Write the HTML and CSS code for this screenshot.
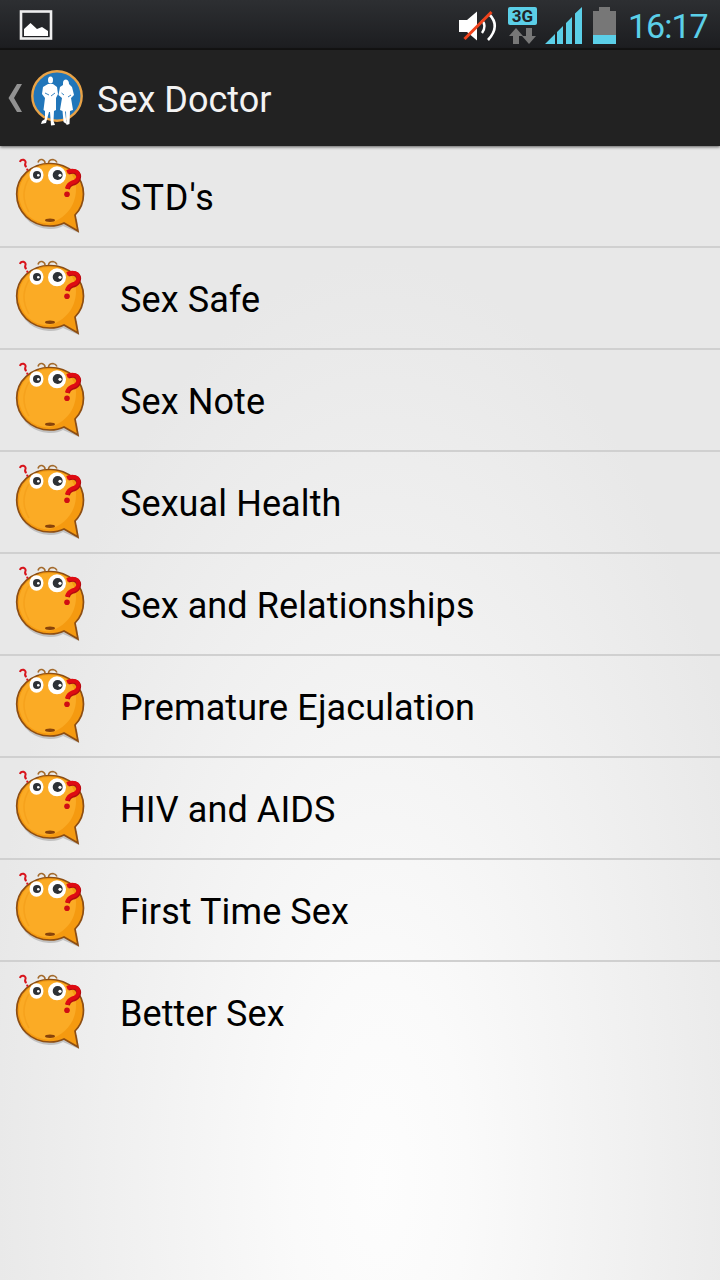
FILE: index.html
```html
<!DOCTYPE html>
<html lang="en">
  <head>
    <meta charset="UTF-8" />
    <meta name="viewport" content="width=device-width, initial-scale=1" />
    <title>Sex Doctor</title>
    <link rel="stylesheet" href="styles.css">
  </head>
  <body>
    <svg class="sprite" aria-hidden="true">
      <symbol id="face" viewBox="0 0 110 100">
        <path d="M18 58Q25 81 49 83Q57 83.500 63 80L79 87L77 73Z" fill="#999" opacity=".5" />
        <path d="M38 16.500Q39 13 42 13.500Q45 14.500 45 17M48.500 17Q49 13.500 53 13.500Q56 14 57 16.500" fill="none" stroke="#a36a2c" stroke-width="1.600" />
        <path d="M50 17.500C69 17.500 83.500 31 83.500 48C83.500 57 80 64 75 69L78 85L64 77C60 79 55 80 50 80C31 80 16.700 66 16.700 48C16.700 31 31 17.500 50 17.500Z" fill="#f59a10" stroke="#8d4e13" stroke-width="1.700" />
        <path d="M48 19C66 18 76 28 76 43C76 60 65 73 49 77.500C31 77 19 64 19 48C19 32 31 20 48 19Z" fill="#fbab25" />
        <path d="M29 66Q19 49 29 32M39 20Q49 17 62 21" fill="none" stroke="#f39b15" stroke-width="1.500" opacity=".55" />
        <ellipse cx="50" cy="74.300" rx="5" ry="1.700" fill="#87430a" />
        <ellipse cx="36.500" cy="29" rx="7" ry="7.800" fill="#fff" />
        <circle cx="57" cy="29.300" r="9" fill="#fff" />
        <circle cx="37" cy="29" r="4" fill="#2d3136" />
        <circle cx="57.700" cy="29" r="5" fill="#2d3136" />
        <circle cx="38.300" cy="29.300" r="1.300" fill="#fff" />
        <circle cx="60" cy="29.300" r="1.600" fill="#fff" />
        <path d="M20 16Q20.500 13.500 23.500 13.800Q26.500 15 25.300 17.500Q24.500 19.500 26.500 21" fill="none" stroke="#d8141c" stroke-width="2" />
        <circle cx="27.300" cy="23.700" r="1.100" fill="#d8141c" />
        <path d="M68 26.500Q74 24 77.500 27Q80 30 78 34Q76 37 72.500 37.500Q68.500 39 67.500 43" fill="none" stroke="#b20b10" stroke-width="4.500" />
        <path d="M67 26Q73 23.500 77 26Q79.500 29 77.500 33Q75.500 36 72 36.500Q68 38 67 42.500" fill="none" stroke="#df0b13" stroke-width="3.800" />
        <circle cx="67" cy="48.300" r="2.800" fill="#cf0d14" />
      </symbol>
    </svg>

    <div class="status-bar">
      <svg class="picture-icon" viewBox="0 0 34 32" width="34" height="32">
        <rect x="2" y="2.500" width="30" height="27" fill="none" stroke="#eee" stroke-width="2.600" />
        <path d="M5 27V20L11.500 14L18 20L23 18L29 22V27Z" fill="#fff" />
      </svg>
      <svg viewBox="455 0 165 50" width="165" height="50">
        <path d="M459 20H467L477 11.500V40.500L467 32H459Z" fill="#fff" />
        <path d="M482 20Q487 26 482 33" fill="none" stroke="#fff" stroke-width="2.400" />
        <path d="M489 14Q501 26 488 40" fill="none" stroke="#fff" stroke-width="2.600" />
        <path d="M464.500 39L491.500 12" stroke="#f0431c" stroke-width="3" />
        <rect x="508" y="7" width="29" height="18" rx="2" fill="#5bcfe8" />
        <text class="network" x="522.500" y="22" text-anchor="middle">3G</text>
        <path d="M516 28L523 36H519V44H513V36H509Z" fill="#777" />
        <path d="M526 28H532V36H536L529 44L522 36H526Z" fill="#777" />
        <path d="M545 44L555 34V44ZM557 44V32L563 26V44ZM566 44V23L572 17V44ZM575 44V13.500L582 7V44Z" fill="#5bcfe8" />
        <path d="M599 7H610V11H616V35H593V11H599Z" fill="#777" />
        <rect x="593" y="35" width="23" height="9" fill="#5bcfe8" />
      </svg>
      <span class="clock">16:17</span>
    </div>

    <header class="action-bar">
      <svg viewBox="0 0 90 96" width="90" height="96">
        <path d="M17 34H22L14 48L22 62H17L8.500 48Z" fill="#929292" />
        <circle cx="57" cy="46" r="24.700" fill="#2176ba" stroke="#e9a347" stroke-width="2.400" />
        <g fill="#fff">
          <ellipse cx="50.500" cy="30" rx="2.500" ry="3.500" />
          <path d="M48 34L53 34L57 37L58 44L56 48L56 60L54 61L53.500 71L55 75L51 75.500L50 62H49L46 73L41 74L42 71L45 69L45 61L43.500 60L45 48L42 44L43 37Z" />
          <path d="M63 33Q63 29.500 66 29.500Q69 30 69 34L72 37L74 45L71 48L73 60L70 61L69.500 74L66.500 75L66 62L65 61L66.500 74L63.500 72L62.500 61L60 60L62 48L58.500 45L60 37L63 35Z" />
        </g>
        <path d="M45 43L49 45M55 43L51 46M61.500 43L64 45M68 47L71 45" stroke="#2176ba" stroke-width=".9" />
      </svg>
      <h1>Sex Doctor</h1>
    </header>

    <ul class="topics">
      <li class="abbr"><svg class="face"><use href="#face" /></svg><span>STD's</span></li>
      <li><svg class="face"><use href="#face" /></svg><span>Sex Safe</span></li>
      <li><svg class="face"><use href="#face" /></svg><span>Sex Note</span></li>
      <li><svg class="face"><use href="#face" /></svg><span>Sexual Health</span></li>
      <li><svg class="face"><use href="#face" /></svg><span>Sex and Relationships</span></li>
      <li><svg class="face"><use href="#face" /></svg><span>Premature Ejaculation</span></li>
      <li><svg class="face"><use href="#face" /></svg><span>HIV and AIDS</span></li>
      <li><svg class="face"><use href="#face" /></svg><span>First Time Sex</span></li>
      <li><svg class="face"><use href="#face" /></svg><span>Better Sex</span></li>
    </ul>
  </body>
</html>
```
FILE: styles.css
```css
* {
  box-sizing: border-box;
}
body {
  margin: 0;
  min-height: 1280px;
  font-family: Roboto, sans-serif;
  background: radial-gradient(ellipse 400px 920px at 380px 1180px, #fdfdfd 0%, #fafafa 22%, #e8e8e8 100%);
}
.sprite {
  display: none;
}
.status-bar {
  display: flex;
  height: 50px;
  background: linear-gradient(#2d2f32, #1c1d20);
  border-bottom: 2px solid #131313;
}
.status-bar svg {
  flex: none;
}
.picture-icon {
  margin: 9px 402px 0 19px;
}
.network {
  font-size: 17px;
  font-weight: bold;
  fill: #222427;
}
.clock {
  margin-left: 8px;
  font-size: 34px;
  line-height: 52px;
  letter-spacing: -1px;
  color: #5bcfe8;
}
.action-bar {
  display: flex;
  align-items: center;
  height: 96px;
  background: #222;
  box-shadow: 0 1px 3px rgba(0, 0, 0, 0.6);
}
h1 {
  margin: 4px 0 0 7px;
  font-size: 36px;
  font-weight: 400;
  color: #f3f3f3;
}
.topics {
  margin: 0;
  padding: 0;
  list-style: none;
}
.topics li {
  display: flex;
  align-items: center;
  height: 102px;
  border-bottom: 2px solid #d0d0d0;
  font-size: 36px;
  letter-spacing: 0.1px;
  color: #000;
}
.topics .abbr {
  letter-spacing: 1px;
}
.topics li:last-child {
  border-color: transparent;
}
.topics span {
  margin: 3px 0 0 10px;
}
.face {
  width: 110px;
  height: 100px;
}
```
